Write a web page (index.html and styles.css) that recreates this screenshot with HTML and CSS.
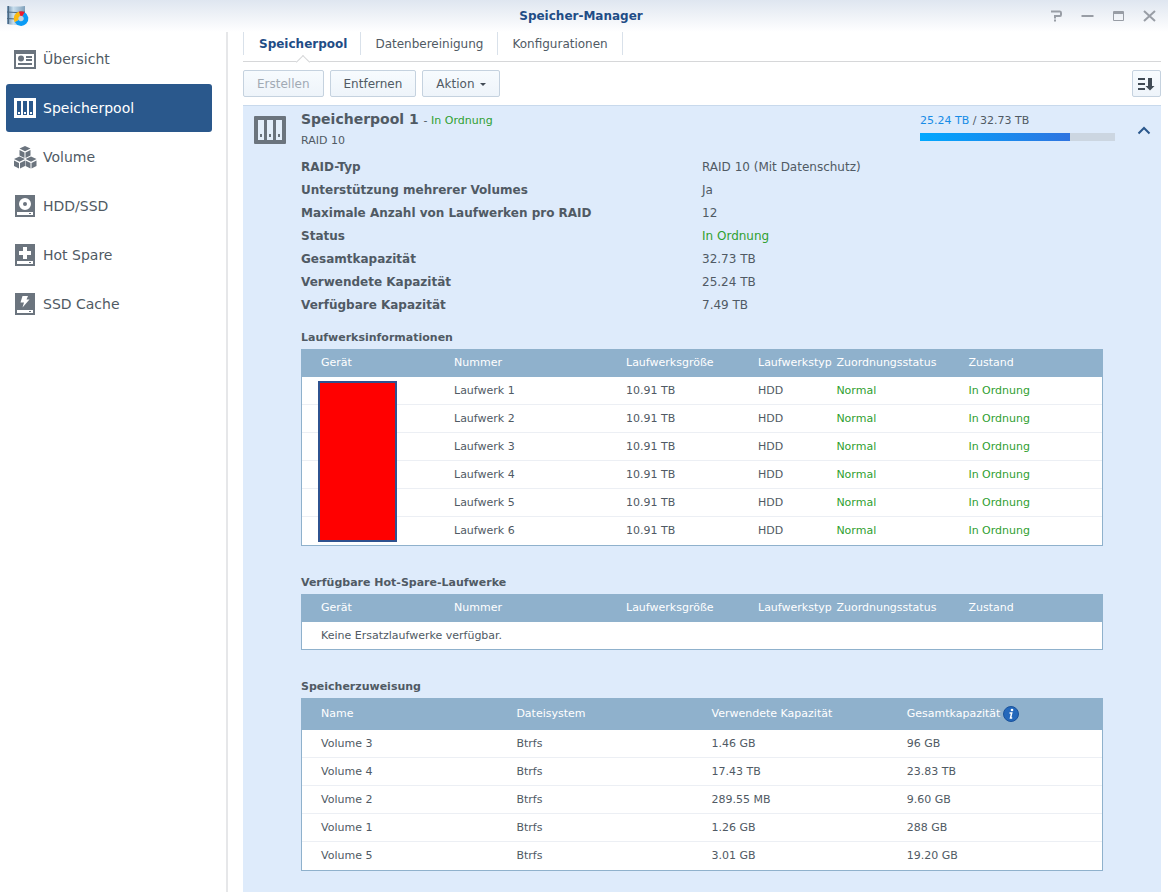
FILE: index.html
```html
<!DOCTYPE html>
<html lang="de">
<head>
<meta charset="utf-8">
<title>Speicher-Manager</title>
<link rel="stylesheet" href="styles.css">
</head>
<body>
<div class="window">
  <header class="titlebar">
    <svg class="app-icon" width="24" height="24" viewBox="0 0 24 24" aria-hidden="true">
      <defs><linearGradient id="cyl" x1="0" x2="1" y1="0" y2="0"><stop offset="0" stop-color="#6a8cab"/><stop offset=".35" stop-color="#c9dfee"/><stop offset="1" stop-color="#7f9fb9"/></linearGradient></defs>
      <path d="M1 2Q10 3 19 2V20Q10 22 1 20Z" fill="url(#cyl)"/>
      <path d="M1 8Q10 9 19 8M1 14.500Q10 15.500 19 14.500M2.500 2V20" fill="none" stroke="#4d6982"/>
      <circle cx="15" cy="14.500" r="3.500" fill="#c6d5e0"/>
      <g fill="none" stroke-width="4.600">
        <path d="M17.500 10.200A5 5 0 1 1 10.700 17" stroke="#0a9bf5"/>
        <path d="M10.700 17A5 5 0 0 1 13.700 9.700" stroke="#fbb90f"/>
        <path d="M13.700 9.700A5 5 0 0 1 17.500 10.200" stroke="#ea1c2c"/>
      </g>
    </svg>
    <h1 class="title">Speicher-Manager</h1>
    <div class="window-controls">
      <button type="button" aria-label="Hilfe"><svg width="13" height="12" viewBox="0 0 13 12"><path d="M1 1.500H10Q11 1.500 11 3V4.500Q11 6 10 6H5V8.500M5 9.500V11.500" /></svg></button>
      <button type="button" aria-label="Minimieren"><svg width="13" height="12" viewBox="0 0 13 12"><path d="M.5 6H12.500"/></svg></button>
      <button type="button" aria-label="Maximieren"><svg width="13" height="12" viewBox="0 0 13 12"><path class="thin" d="M1.500 1.500H11.500V10.500H1.500Z"/><path d="M1 3H12" /></svg></button>
      <button type="button" aria-label="Schließen"><svg width="13" height="12" viewBox="0 0 13 12"><path d="M1 1L12 11M12 1L1 11"/></svg></button>
    </div>
  </header>
  <div class="body">
    <nav class="sidebar">
      <a class="nav-item" href="#">
        <svg width="24" height="24" viewBox="0 0 24 24"><path fill="currentColor" fill-rule="evenodd" d="M1 3H23V22H1ZM3 7V20H21V7Z"/><circle cx="8" cy="11.500" r="3" fill="currentColor"/><path d="M13 10H19M13 13H19M5 17H19" stroke="currentColor" stroke-width="2"/></svg>
        <span>Übersicht</span></a>
      <a class="nav-item active" href="#" aria-current="page">
        <svg width="24" height="24" viewBox="0 0 24 24"><path fill="currentColor" fill-rule="evenodd" d="M1 2H23V22H1ZM4 5V19H8V5ZM10 5V19H14V5ZM16 5V19H20V5Z"/><path d="M5 16H7V18H5ZM11 16H13V18H11ZM17 16H19V18H17Z" fill="currentColor"/></svg>
        <span>Speicherpool</span></a>
      <a class="nav-item" href="#">
        <svg width="24" height="24" viewBox="0 0 24 24"><defs><g id="cube"><path d="M0 2.600L5.500 0L11 2.600L5.500 5.200Z"/><path d="M0 4L5 6.400V12L0 9.500Z"/><path d="M11 4L6 6.400V12L11 9.500Z"/></g></defs><g fill="currentColor"><use href="#cube" x="6.500" y="1"/><use href="#cube" x="1" y="11.500"/><use href="#cube" x="12.500" y="11.500"/></g></svg>
        <span>Volume</span></a>
      <a class="nav-item" href="#">
        <svg width="24" height="24" viewBox="0 0 24 24"><path d="M2 1H22V23H2Z" fill="currentColor"/><circle cx="12" cy="10" r="4" fill="none" stroke="#fff" stroke-width="4"/><path d="M4 18H20V21H4Z" fill="#fff"/><path d="M16 19H18V20H16Z" fill="currentColor"/></svg>
        <span>HDD/SSD</span></a>
      <a class="nav-item" href="#">
        <svg width="24" height="24" viewBox="0 0 24 24"><path d="M2 1H22V23H2Z" fill="currentColor"/><path d="M12 4V16M6 10H18" stroke="#fff" stroke-width="4"/><path d="M4 18H20V21H4Z" fill="#fff"/><path d="M16 19H18V20H16Z" fill="currentColor"/></svg>
        <span>Hot Spare</span></a>
      <a class="nav-item" href="#">
        <svg width="24" height="24" viewBox="0 0 24 24"><path d="M2 1H22V23H2Z" fill="currentColor"/><path d="M9.500 4H15L13.500 7.500H16.500L9.500 15.500L11 10.500H7.500Z" fill="#fff"/><path d="M4 18H20V21H4Z" fill="#fff"/><path d="M16 19H18V20H16Z" fill="currentColor"/></svg>
        <span>SSD Cache</span></a>
    </nav>
    <main class="content">
      <div class="tabs" role="tablist">
        <button class="tab selected" type="button" role="tab" aria-selected="true">Speicherpool</button>
        <button class="tab" type="button" role="tab" aria-selected="false">Datenbereinigung</button>
        <button class="tab" type="button" role="tab" aria-selected="false">Konfigurationen</button>
      </div>
      <div class="toolbar">
        <button class="btn" type="button" disabled>Erstellen</button>
        <button class="btn" type="button">Entfernen</button>
        <button class="btn" type="button">Aktion<span class="caret"></span></button>
        <button class="btn sort" type="button" aria-label="Sortieren"><svg width="17" height="14" viewBox="0 0 17 14"><path d="M0 2H7M0 7H7M0 12H7" stroke="#414b55" stroke-width="2"/><path d="M10 1H14V9H16.500L12 13.500L7.500 9H10Z" fill="#414b55"/></svg></button>
      </div>
      <section class="pool">
        <div class="pool-head">
          <svg class="pool-icon" width="32" height="28" viewBox="0 0 32 28" aria-hidden="true"><rect width="32" height="28" rx="1" fill="#6b747d"/><path d="M4 4H10V24H4ZM13 4H19V24H13ZM22 4H28V24H22Z" fill="#e4effb"/><path d="M6 18H8V21H6ZM15 18H17V21H15ZM24 18H26V21H24Z" fill="#6b747d"/></svg>
          <div class="pool-name">
            <h2>Speicherpool 1 <span class="state">- <span class="ok">In Ordnung</span></span></h2>
            <p>RAID 10</p>
          </div>
          <div class="usage">
            <div><span class="used">25.24 TB</span> / 32.73 TB</div>
            <div class="bar"><div class="fill" style="width:77%"></div></div>
          </div>
          <button class="collapse" type="button" aria-label="Einklappen"><svg width="14" height="9" viewBox="0 0 14 9"><path d="M1.500 7.500L7 2L12.500 7.500" fill="none" stroke="#2a578c" stroke-width="2"/></svg></button>
        </div>
        <div class="details">
          <dl class="facts">
            <dt>RAID-Typ</dt><dd>RAID 10 (Mit Datenschutz)</dd>
            <dt>Unterstützung mehrerer Volumes</dt><dd>Ja</dd>
            <dt>Maximale Anzahl von Laufwerken pro RAID</dt><dd>12</dd>
            <dt>Status</dt><dd class="ok">In Ordnung</dd>
            <dt>Gesamtkapazität</dt><dd>32.73 TB</dd>
            <dt>Verwendete Kapazität</dt><dd>25.24 TB</dd>
            <dt>Verfügbare Kapazität</dt><dd>7.49 TB</dd>
          </dl>
          <div class="block">
            <h3>Laufwerksinformationen</h3>
            <div class="table-wrap">
              <table class="grid drives">
                <thead><tr><th>Gerät</th><th>Nummer</th><th>Laufwerksgröße</th><th>Laufwerkstyp</th><th>Zuordnungsstatus</th><th>Zustand</th></tr></thead>
                <tbody>
                  <tr><td></td><td>Laufwerk 1</td><td>10.91 TB</td><td>HDD</td><td class="ok">Normal</td><td class="ok">In Ordnung</td></tr>
                  <tr><td></td><td>Laufwerk 2</td><td>10.91 TB</td><td>HDD</td><td class="ok">Normal</td><td class="ok">In Ordnung</td></tr>
                  <tr><td></td><td>Laufwerk 3</td><td>10.91 TB</td><td>HDD</td><td class="ok">Normal</td><td class="ok">In Ordnung</td></tr>
                  <tr><td></td><td>Laufwerk 4</td><td>10.91 TB</td><td>HDD</td><td class="ok">Normal</td><td class="ok">In Ordnung</td></tr>
                  <tr><td></td><td>Laufwerk 5</td><td>10.91 TB</td><td>HDD</td><td class="ok">Normal</td><td class="ok">In Ordnung</td></tr>
                  <tr><td></td><td>Laufwerk 6</td><td>10.91 TB</td><td>HDD</td><td class="ok">Normal</td><td class="ok">In Ordnung</td></tr>
                </tbody>
              </table>
              <div class="redaction"></div>
            </div>
          </div>
          <div class="block">
            <h3>Verfügbare Hot-Spare-Laufwerke</h3>
            <table class="grid drives">
              <thead><tr><th>Gerät</th><th>Nummer</th><th>Laufwerksgröße</th><th>Laufwerkstyp</th><th>Zuordnungsstatus</th><th>Zustand</th></tr></thead>
              <tbody><tr><td colspan="6">Keine Ersatzlaufwerke verfügbar.</td></tr></tbody>
            </table>
          </div>
          <div class="block">
            <h3>Speicherzuweisung</h3>
            <table class="grid volumes">
              <thead><tr><th>Name</th><th>Dateisystem</th><th>Verwendete Kapazität</th><th><span class="with-info">Gesamtkapazität <svg width="16" height="16" viewBox="0 0 16 16" aria-hidden="true"><circle cx="8" cy="8" r="7.500" fill="#2468bb" stroke="#1b529a"/><circle cx="9" cy="4" r="1.300" fill="#fff"/><path d="M6.500 7H8.700L7.500 12H9.200" fill="none" stroke="#fff" stroke-width="1.500"/></svg></span></th></tr></thead>
              <tbody>
                <tr><td>Volume 3</td><td>Btrfs</td><td>1.46 GB</td><td>96 GB</td></tr>
                <tr><td>Volume 4</td><td>Btrfs</td><td>17.43 TB</td><td>23.83 TB</td></tr>
                <tr><td>Volume 2</td><td>Btrfs</td><td>289.55 MB</td><td>9.60 GB</td></tr>
                <tr><td>Volume 1</td><td>Btrfs</td><td>1.26 GB</td><td>288 GB</td></tr>
                <tr><td>Volume 5</td><td>Btrfs</td><td>3.01 GB</td><td>19.20 GB</td></tr>
              </tbody>
            </table>
          </div>
        </div>
      </section>
    </main>
  </div>
</div>
</body>
</html>
```
FILE: styles.css
```css
* { box-sizing: border-box; }
body {
  margin: 0;
  background: #fff;
  color: #505a64;
  font: 12px/16px Verdana, "DejaVu Sans", sans-serif;
}
button { font: inherit; color: inherit; cursor: pointer; }
h1, h2, h3, p, dl, dd { margin: 0; }
.ok { color: #30a030; }

.window { display: flex; flex-direction: column; min-height: 100vh; }
.titlebar {
  display: grid;
  grid-template-columns: 1fr auto 1fr;
  align-items: center;
  height: 32px;
  padding: 0 12px 0 6px;
  background: linear-gradient(#dfe6f0, #fff);
}
.title { font-size: 12px; line-height: 16px; color: #1f4d86; }
.window-controls { display: flex; justify-content: flex-end; gap: 18px; }
.window-controls button { display: flex; padding: 0; border: 0; background: none; }
.window-controls path { fill: none; stroke: #989da5; stroke-width: 2; }
.window-controls .thin { stroke-width: 1; }

.body { display: flex; flex: 1; }
.sidebar {
  display: flex;
  flex-direction: column;
  gap: 1px;
  width: 228px;
  flex: none;
  padding: 3px 14px 0 6px;
  border-right: 2px solid #e6e7e9;
}
.nav-item {
  display: flex;
  align-items: center;
  gap: 6px;
  height: 48px;
  padding: 0 7px;
  border-radius: 3px;
  color: #6b747e;
  font-size: 14px;
  text-decoration: none;
}
.nav-item span { color: #505a64; }
.nav-item.active { background: #2a588c; }
.nav-item.active, .nav-item.active span { color: #fff; }

.content { display: flex; flex-direction: column; flex: 1; min-width: 0; padding: 0 7px 0 15px; }
.tabs { display: flex; height: 30px; border-bottom: 1px solid #d6d7d9; }
.tab {
  position: relative;
  height: 23px;
  padding: 0 14px;
  border: 0;
  border-right: 1px solid #d9e1ea;
  background: none;
}
.tab:first-child { padding: 0 13px 0 15px; border-left: 1px solid #d9e1ea; }
.tab.selected { color: #1f4d86; font-weight: bold; }
.tab.selected::after {
  content: "";
  position: absolute;
  left: 54px;
  top: 25px;
  width: 9px;
  height: 9px;
  border: solid #d6d7d9;
  border-width: 1px 0 0 1px;
  background: #fff;
  transform: rotate(45deg);
}

.toolbar { display: flex; gap: 6px; padding: 8px 0; }
.btn {
  display: flex;
  align-items: center;
  height: 27px;
  padding: 0 13px;
  border: 1px solid #c5d2df;
  border-radius: 2px;
  background: linear-gradient(#f7fbfe, #eef4fa);
}
.btn:disabled { color: #a1aab4; }
.caret { margin: 2px 0 0 5px; border: 3px solid transparent; border-top-color: #414b55; border-bottom: 0; }
.btn.sort { margin-left: auto; padding: 0 5px; }

.pool { flex: 1; border-top: 1px solid #c8d9ec; background: #deebfb; }
.pool-head { display: flex; align-items: flex-start; padding: 3px 10px 0 11px; }
.pool-icon { flex: none; margin: 7px 15px 0 0; }
.pool-name { flex: 1; font-size: 11px; }
.pool-name h2 { font-size: 14px; line-height: 20px; }
.pool-name p { line-height: 20px; }
.state { font-size: 11px; font-weight: normal; }
.usage { width: 195px; padding-top: 4px; font-size: 11px; }
.used { color: #178be6; }
.bar { height: 8px; margin-top: 4px; background: #ccd6e1; }
.fill { height: 100%; background: linear-gradient(90deg, #00a8ff, #2f74e0); }
.collapse { display: flex; margin: 17px 0 0 22px; padding: 0; border: 0; background: none; }

.details { padding: 5px 58px 20px; }
.facts { display: grid; grid-template-columns: 1fr 1fr; line-height: 23px; }
.facts dt { font-weight: bold; }
.block + .block { margin-top: 29px; }
.facts + .block { margin-top: 13px; }
.block h3 { margin-bottom: 3px; font-size: 11px; line-height: 16px; }
.table-wrap { position: relative; }
.grid {
  width: 100%;
  border: 1px solid #8fb1cc;
  border-top: 0;
  border-spacing: 0;
  table-layout: fixed;
  background: #fff;
  font-size: 11px;
}
.grid th, .grid td { height: 28px; padding: 0; text-align: left; white-space: nowrap; }
.grid th { background: #8fb1cc; color: #fff; font-weight: normal; }
.grid td { border-bottom: 1px solid #eceff4; }
.grid tr:last-child td { border-bottom: 0; }
.grid td[colspan] { height: 27px; }
.grid th:first-child, .grid td:first-child { padding-left: 19px; }
.drives th:nth-child(1) { width: 19%; }
.drives th:nth-child(2) { width: 21.5%; }
.drives th:nth-child(3) { width: 16.5%; }
.drives th:nth-child(4) { width: 9.8%; }
.drives th:nth-child(5) { width: 16.5%; }
.volumes th { height: 32px; width: 24.4%; }
.volumes th:first-child { width: 26.8%; }
.with-info { display: flex; align-items: center; gap: 3px; }
.redaction {
  position: absolute;
  left: 17px;
  top: 32px;
  width: 79px;
  height: 161px;
  border: 2px solid #2f528f;
  background: #f00;
}
```
